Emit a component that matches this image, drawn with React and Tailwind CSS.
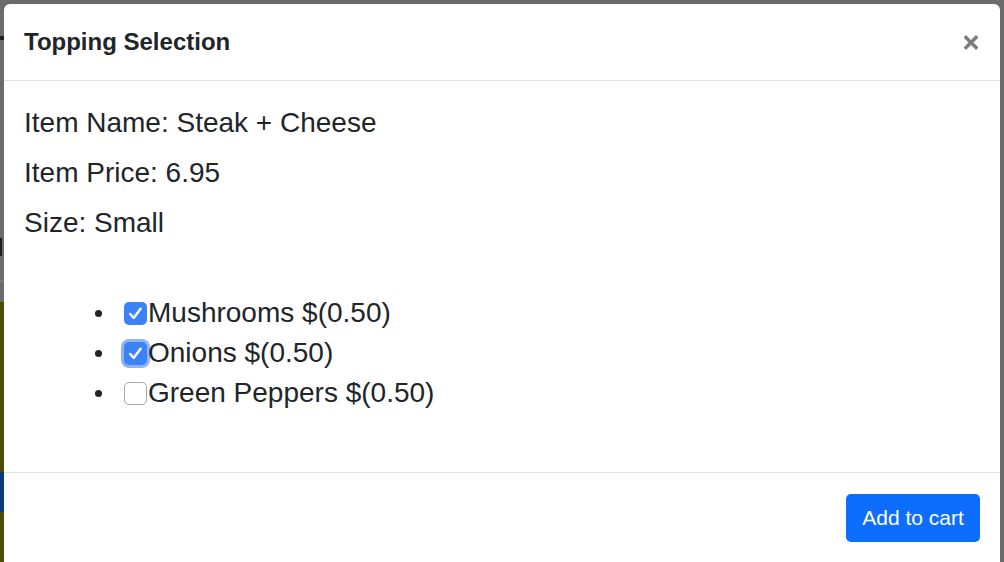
import React from 'react';

const toppings = [
  { name: 'Mushrooms', price: '0.50', checked: true, focused: false },
  { name: 'Onions', price: '0.50', checked: true, focused: true },
  { name: 'Green Peppers', price: '0.50', checked: false, focused: false },
];

const Check = ({ checked, focused }) => (
  <span
    className={`flex w-[23px] h-[23px] shrink-0 items-center justify-center rounded-[5px] ${
      checked ? 'bg-[#3b82f6]' : 'bg-white border border-[#a9a9a9]'
    } ${focused ? 'shadow-[0_0_0_3px_rgba(96,148,240,0.7)]' : ''}`}
  >
    {checked && (
      <svg width="23" height="23" viewBox="0 0 23 23">
        <path d="M6.2 12 L9.8 15.8 L16.6 6.8" fill="none" stroke="#fff" strokeWidth="2.5" strokeLinecap="round" strokeLinejoin="round" />
      </svg>
    )}
  </span>
);

export default function App() {
  return (
    <div className="flex w-[1004px] h-[562px] overflow-hidden bg-[#6b6b6b] font-['Liberation_Sans',Arial,sans-serif] text-[#212529]">
      {/* page behind the backdrop */}
      <div className="flex w-[4px] shrink-0 flex-col">
        <div className="h-[36px]" />
        <div className="h-[4px] bg-[#1e1e1e]" />
        <div className="h-[198px]" />
        <div className="h-[18px] w-[2px] bg-[#1e1e1e]" />
        <div className="h-[24px]" />
        <div className="h-[2px] bg-[#7c7c7c]" />
        <div className="h-[20px]" />
        <div className="h-[170px] bg-[#4f4c06]" />
        <div className="h-[40px] bg-[#0d3a7a]" />
        <div className="flex-1 bg-[#4f4c06]" />
      </div>

      <div className="w-[996px] shrink-0 pt-[4px]">
        <div className="h-[600px] rounded-t-[6px] bg-white">
          <div className="flex h-[77px] items-center justify-between border-b border-[#dee2e6] px-5">
            <h5 className="text-[24px] leading-[32px] font-bold">Topping Selection</h5>
            <button className="mr-[2px] flex h-[16px] w-[14px] items-center justify-center">
              <svg width="14" height="15" viewBox="0 0 14 15">
                <path d="M2 2.5 L12 12.5 M12 2.5 L2 12.5" stroke="#7c7c7c" strokeWidth="3.4" strokeLinecap="square" />
              </svg>
            </button>
          </div>

          <div className="px-5 pt-[24px] pb-[59px] text-[28px]">
            <p className="mb-[14px] leading-[36px]">Item Name: Steak + Cheese</p>
            <p className="mb-[14px] leading-[36px]">Item Price: 6.95</p>
            <p className="mb-[14px] leading-[36px]">Size: Small</p>
            <ul className="mt-[52px]">
              {toppings.map((t) => (
                <li key={t.name} className="flex h-[40px] items-center">
                  <span className="ml-[71px] mr-[22px] h-[7px] w-[7px] rounded-full bg-[#212529]" />
                  <Check checked={t.checked} focused={t.focused} />
                  <span className="ml-px leading-[40px]">
                    {t.name} ${'('}{t.price})
                  </span>
                </li>
              ))}
            </ul>
          </div>

          <div className="flex justify-end border-t border-[#dee2e6] px-5 pt-[21px]">
            <button className="flex h-[48px] w-[134px] items-center justify-center rounded-[5px] bg-[#0d6efd] text-[21px] text-white">
              Add to cart
            </button>
          </div>
        </div>
      </div>
    </div>
  );
}
